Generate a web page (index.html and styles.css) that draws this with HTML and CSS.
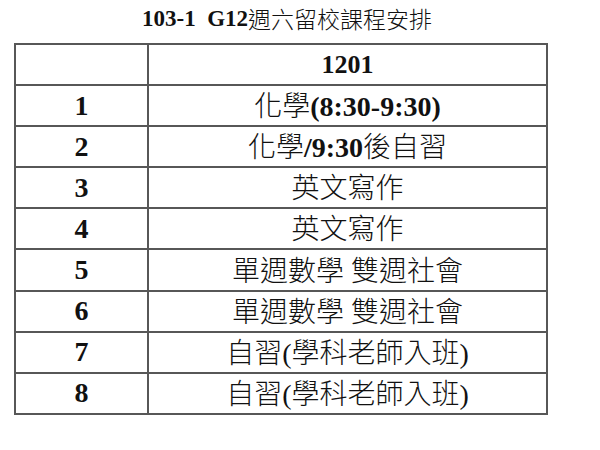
FILE: index.html
```html
<!DOCTYPE html>
<html lang="zh-Hant">
<head>
<meta charset="utf-8">
<title>103-1 G12週六留校課程安排</title>
<link rel="stylesheet" href="styles.css">
</head>
<body>
<div class="page">
  <h1 class="title"><b class="lat">103-1&nbsp; G12</b><span class="cjk">週六留校課程安排</span></h1>
  <table class="schedule">
    <colgroup><col class="col-num"><col class="col-class"></colgroup>
    <thead>
      <tr><th class="num"></th><th class="cls">1201</th></tr>
    </thead>
    <tbody>
      <tr><th class="num">1</th><td><span class="cjk">化學</span><b class="lat">(8:30-9:30)</b></td></tr>
      <tr><th class="num">2</th><td><span class="cjk">化學</span><b class="lat">/9:30</b><span class="cjk">後自習</span></td></tr>
      <tr><th class="num">3</th><td><span class="cjk">英文寫作</span></td></tr>
      <tr><th class="num">4</th><td><span class="cjk">英文寫作</span></td></tr>
      <tr><th class="num">5</th><td><span class="cjk">單週數學</span><span class="lat"> </span><span class="cjk">雙週社會</span></td></tr>
      <tr><th class="num">6</th><td><span class="cjk">單週數學</span><span class="lat"> </span><span class="cjk">雙週社會</span></td></tr>
      <tr><th class="num">7</th><td><span class="cjk">自習</span><span class="lat">(</span><span class="cjk">學科老師入班</span><span class="lat">)</span></td></tr>
      <tr><th class="num">8</th><td><span class="cjk">自習</span><span class="lat">(</span><span class="cjk">學科老師入班</span><span class="lat">)</span></td></tr>
    </tbody>
  </table>
</div>
</body>
</html>
```

FILE: styles.css
```css
html, body {
  margin: 0;
  padding: 0;
  background: #ffffff;
}

body {
  font-family: "Liberation Serif", "Noto Sans CJK TC", serif;
  color: #111111;
}

.lat {
  font-family: "Liberation Serif", serif;
}

.cjk {
  font-family: "Noto Sans CJK TC", sans-serif;
  font-weight: 300;
}

.page {
  width: 600px;
  height: 450px;
}

.title {
  margin: 0;
  height: 37px;
  padding: 0 0 6px 20px;
  width: 534px;
  display: flex;
  align-items: center;
  justify-content: center;
  font-size: 23px;
  font-weight: 300;
  line-height: 1;
  box-sizing: content-box;
}

.title .lat {
  font-weight: 700;
}

.schedule {
  margin-left: 14px;
  width: 534px;
  border-collapse: collapse;
  table-layout: fixed;
}

.col-num {
  width: 133px;
}

.schedule tr {
  height: 41.1px;
}

.schedule th,
.schedule td {
  border: 2px solid #575757;
  padding: 0;
  text-align: center;
  vertical-align: middle;
  line-height: 1;
}

.schedule th.num {
  font-size: 28px;
  font-weight: 700;
}

.schedule th.cls {
  font-size: 26px;
  font-weight: 700;
}

.schedule td {
  font-size: 28px;
  font-weight: 300;
}

.schedule td b {
  font-weight: 700;
}
```
